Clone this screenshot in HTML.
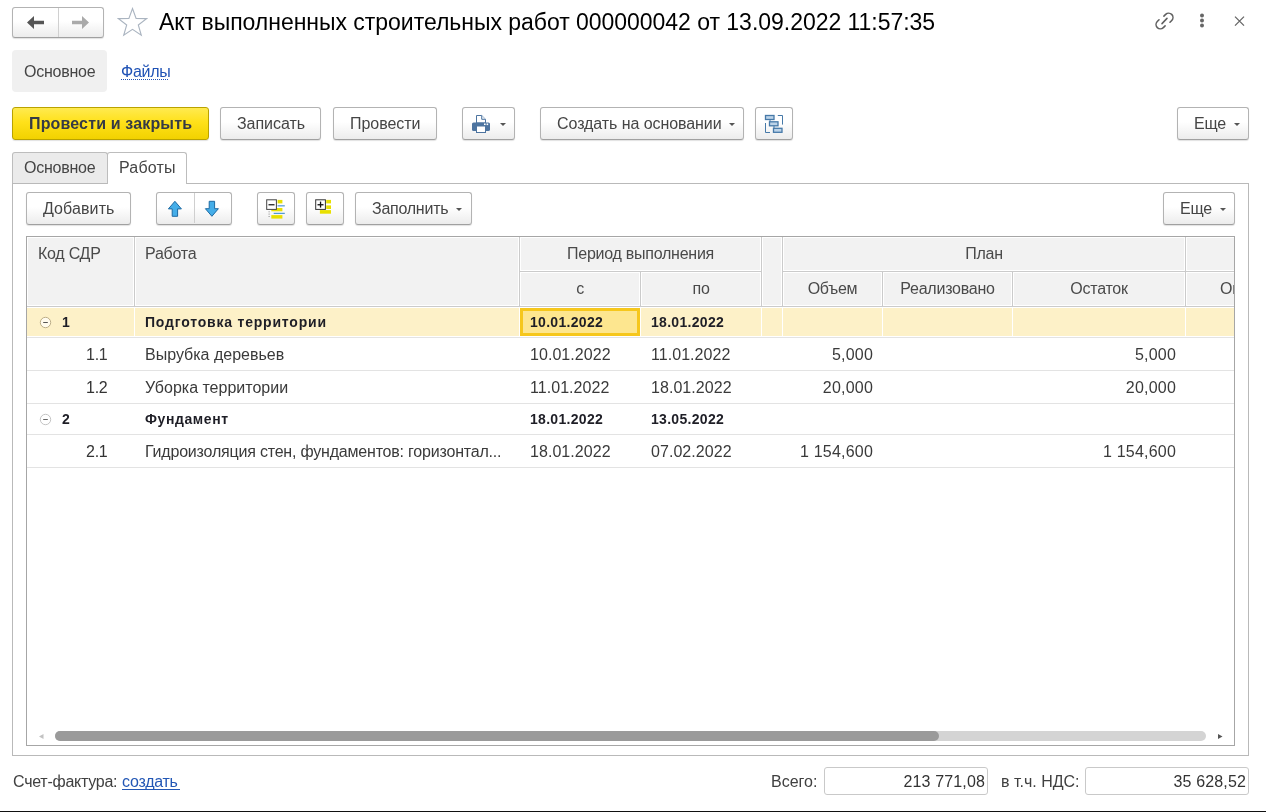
<!DOCTYPE html>
<html><head><meta charset="utf-8">
<style>
*{box-sizing:border-box}
html,body{margin:0;padding:0}
body{-webkit-font-smoothing:antialiased;will-change:transform;width:1266px;height:812px;overflow:hidden;position:relative;background:#fff;font-family:"Liberation Sans",sans-serif;font-size:16px;color:#454545;letter-spacing:-0.25px}
.a{position:absolute}
.t{position:absolute;white-space:nowrap;line-height:18px}
.btn{position:absolute;height:33px;border:1px solid #b3b3b3;border-bottom-color:#a0a0a0;border-radius:3px;background:linear-gradient(#fff 0%,#fff 45%,#ececec 100%);box-shadow:0 1px 1px rgba(0,0,0,.12)}
.btn .t{color:#444}
.tri{position:absolute;width:0;height:0;border-left:3.5px solid transparent;border-right:3.5px solid transparent;border-top:3.5px solid #555}
</style></head>
<body>

<!-- nav group -->
<div class="btn" style="left:12px;top:7px;width:92px;height:31px"></div>
<div class="a" style="left:58px;top:8px;width:1px;height:29px;background:#d0d0d0"></div>
<svg class="a" style="left:26px;top:15px" width="19" height="15" viewBox="0 0 19 15"><path d="M1 7.5 L8 1 V5.8 H18 V9.2 H8 V14 Z" fill="#555"/></svg>
<svg class="a" style="left:71px;top:15px" width="19" height="15" viewBox="0 0 19 15"><path d="M18 7.5 L11 1 V5.8 H1 V9.2 H11 V14 Z" fill="#aaa"/></svg>
<!-- star -->
<svg class="a" style="left:117px;top:7px" width="31" height="30" viewBox="0 0 31 30"><path d="M15.5 1.5 L19.1 11.4 L29.5 11.6 L21.3 18 L24.3 28.3 L15.5 22.3 L6.7 28.3 L9.7 18 L1.5 11.6 L11.9 11.4 Z" fill="none" stroke="#aab4c0" stroke-width="1.1"/></svg>
<div class="t" style="left:159px;top:9px;font-size:23px;line-height:26px;color:#000;letter-spacing:-0.03px">Акт выполненных строительных работ 000000042 от 13.09.2022 11:57:35</div>

<!-- top-right icons -->
<svg class="a" style="left:1153px;top:10px" width="23" height="22" viewBox="0 0 23 22"><g fill="none" stroke="#606060" stroke-width="1.55" stroke-linecap="round"><path d="M10.89 6.13 L12.66 4.36 A4.3 4.3 0 0 1 18.74 10.44 L16.97 12.21"/><path d="M12.11 15.87 L10.34 17.64 A4.3 4.3 0 0 1 4.26 11.56 L6.03 9.79"/><path d="M9 13.6 L14 8.4"/></g></svg>
<svg class="a" style="left:1198px;top:12px" width="8" height="18" viewBox="0 0 8 18"><g fill="#666"><circle cx="4" cy="3.6" r="2"/><circle cx="4" cy="8.5" r="2"/><circle cx="4" cy="13.4" r="2"/></g></svg>
<svg class="a" style="left:1233px;top:15px" width="13" height="12" viewBox="0 0 13 12"><g stroke="#666" stroke-width="1.3"><path d="M2 1.6 L11 10.6 M11 1.6 L2 10.6"/></g></svg>

<!-- page tabs -->
<div class="a" style="left:12px;top:50px;width:95px;height:42px;background:#f0f0f0;border-radius:4px"></div>
<div class="t" style="left:24px;top:63px">Основное</div>
<div class="t" style="left:121px;top:63px;color:#1f52b5">Файлы</div>
<div class="a" style="left:121px;top:79px;width:48px;height:1px;background:repeating-linear-gradient(90deg,#1f52b5 0 1px,transparent 1px 2px)"></div>

<!-- main command bar -->
<div class="btn" style="left:12px;top:107px;width:197px;border-color:#b9a200;background:linear-gradient(#ffea50 0%,#ffe11a 45%,#f2d200 100%)"></div>
<div class="t" style="left:29px;top:115px;font-weight:bold;color:#353a45;letter-spacing:0.15px">Провести и закрыть</div>

<div class="btn" style="left:220px;top:107px;width:101px"></div>
<div class="t" style="left:237px;top:115px;letter-spacing:-0.05px">Записать</div>
<div class="btn" style="left:333px;top:107px;width:104px"></div>
<div class="t" style="left:350px;top:115px;letter-spacing:-0.05px">Провести</div>

<div class="btn" style="left:462px;top:107px;width:53px"></div>
<svg class="a" style="left:471px;top:114px" width="20" height="20" viewBox="0 0 20 20">
 <path d="M5.5 1.5 H10.7 L14.5 5.3 V9 H5.5 Z" fill="#fff" stroke="#4d74a0" stroke-width="1"/>
 <path d="M10.7 1.5 V5.3 H14.5" fill="#eef2f6" stroke="#4d74a0" stroke-width="1"/>
 <rect x="1" y="8.5" width="18" height="8.5" rx="1.6" fill="#4d74a0"/>
 <rect x="13" y="9.5" width="1.6" height="1.6" fill="#fff"/><rect x="15.6" y="9.5" width="1.6" height="1.6" fill="#fff"/>
 <rect x="5.5" y="12" width="9" height="6.5" fill="#fff" stroke="#4d74a0" stroke-width="1"/>
</svg>
<div class="tri" style="left:500px;top:123px"></div>

<div class="btn" style="left:540px;top:107px;width:204px"></div>
<div class="t" style="left:557px;top:115px;letter-spacing:-0.07px">Создать на основании</div>
<div class="tri" style="left:729px;top:123px"></div>

<div class="btn" style="left:755px;top:107px;width:38px"></div>
<svg class="a" style="left:764px;top:114px" width="20" height="20" viewBox="0 0 20 20">
 <g fill="#bcd3e8" stroke="#4679a8" stroke-width="1.3">
 <rect x="1.5" y="1.5" width="8.5" height="4"/>
 <rect x="5.5" y="7.8" width="8.5" height="4"/>
 <rect x="9.5" y="14.3" width="8.5" height="4"/>
 </g>
 <g fill="none" stroke="#4679a8" stroke-width="1">
 <path d="M6 5.5 V7.8 M10 11.8 V14.3"/>
 <path d="M13.8 1.5 H18.5 V10.6"/>
 <path d="M1.5 9 V18.5 H6"/>
 </g>
</svg>

<div class="btn" style="left:1177px;top:107px;width:72px"></div>
<div class="t" style="left:1194px;top:115px">Еще</div>
<div class="tri" style="left:1234px;top:123px"></div>

<!-- content tabs -->
<div class="a" style="left:12px;top:152px;width:96px;height:32px;background:#ebebeb;border:1px solid #bdbdbd;border-bottom:none;border-radius:3px 3px 0 0"></div>
<div class="t" style="left:24px;top:159px">Основное</div>
<div class="a" style="left:12px;top:183px;width:1237px;height:573px;border:1px solid #b9b9b9"></div>
<div class="a" style="left:107px;top:152px;width:80px;height:32px;background:#fff;border:1px solid #bdbdbd;border-bottom:none;border-radius:3px 3px 0 0"></div>
<div class="t" style="left:119px;top:159px;letter-spacing:0.2px">Работы</div>

<!-- inner toolbar -->
<div class="btn" style="left:26px;top:192px;width:105px"></div>
<div class="t" style="left:43px;top:200px;letter-spacing:0.1px">Добавить</div>
<div class="btn" style="left:156px;top:192px;width:76px"></div>
<div class="a" style="left:194px;top:193px;width:1px;height:30px;background:#cfcfcf"></div>
<svg class="a" style="left:166px;top:200px" width="18" height="18" viewBox="0 0 18 18"><path d="M8.9 1.3 L15.4 8.9 H11.6 V16.3 H6.2 V8.9 H2.4 Z" fill="#45aee9" stroke="#1d6aa3" stroke-width="1" stroke-linejoin="round"/></svg>
<svg class="a" style="left:203px;top:200px" width="18" height="18" viewBox="0 0 18 18"><path d="M8.9 16.3 L15.4 8.7 H11.6 V1.3 H6.2 V8.7 H2.4 Z" fill="#45aee9" stroke="#1d6aa3" stroke-width="1" stroke-linejoin="round"/></svg>
<div class="btn" style="left:257px;top:192px;width:38px"></div>
<svg class="a" style="left:265px;top:198px" width="22" height="22" viewBox="0 0 22 22">
 <rect x="12.6" y="1.9" width="4.8" height="3.5" fill="#e8e000"/>
 <rect x="6.3" y="10" width="11.1" height="3.3" fill="#e8e000"/>
 <rect x="6.3" y="17.1" width="11.1" height="3.5" fill="#e8e000"/>
 <rect x="12.6" y="7.3" width="7.2" height="1.1" fill="#3d8fd0"/>
 <rect x="8.7" y="14.8" width="11.1" height="1.1" fill="#3d8fd0"/>
 <rect x="1.7" y="1.8" width="9.7" height="9.6" fill="#fff" stroke="#444" stroke-width="1"/>
 <rect x="3.5" y="6.1" width="6" height="1.3" fill="#222"/>
 <rect x="3.6" y="13.3" width="1" height="1" fill="#888"/><rect x="3.6" y="15.6" width="1" height="1" fill="#888"/><rect x="3.6" y="18" width="1" height="1" fill="#888"/>
</svg>
<div class="btn" style="left:306px;top:192px;width:38px"></div>
<svg class="a" style="left:314px;top:198px" width="22" height="22" viewBox="0 0 22 22">
 <rect x="12.2" y="1.9" width="4.8" height="3.5" fill="#e8e000"/>
 <rect x="12.2" y="7.4" width="4.8" height="3.6" fill="#e8e000"/>
 <rect x="5.9" y="12.1" width="11.1" height="3.6" fill="#e8e000"/>
 <rect x="1.7" y="1.8" width="9.7" height="9.6" fill="#fff" stroke="#333" stroke-width="1"/>
 <rect x="3.5" y="6.1" width="6" height="1.3" fill="#111"/>
 <rect x="5.9" y="3.6" width="1.3" height="6" fill="#111"/>
</svg>
<div class="btn" style="left:355px;top:192px;width:117px"></div>
<div class="t" style="left:372px;top:200px">Заполнить</div>
<div class="tri" style="left:456px;top:208px"></div>
<div class="btn" style="left:1163px;top:192px;width:72px"></div>
<div class="t" style="left:1180px;top:200px">Еще</div>
<div class="tri" style="left:1220px;top:208px"></div>

<!-- table -->
<div class="a" style="left:26px;top:236px;width:1209px;height:510px;border:1px solid #a6a6a6;background:#fff;overflow:hidden">
 <div class="a" style="left:0;top:0;width:1207px;height:70px;background:#cbcbcb"></div>
 <div class="a" style="left:0px;top:0px;width:107px;height:69px;background:#f2f2f2;border:1px solid #fff"></div>
 <div class="a" style="left:108px;top:0px;width:384px;height:69px;background:#f2f2f2;border:1px solid #fff"></div>
 <div class="a" style="left:493px;top:0px;width:241px;height:34px;background:#f2f2f2;border:1px solid #fff"></div>
 <div class="a" style="left:493px;top:35px;width:120px;height:34px;background:#f2f2f2;border:1px solid #fff"></div>
 <div class="a" style="left:614px;top:35px;width:120px;height:34px;background:#f2f2f2;border:1px solid #fff"></div>
 <div class="a" style="left:735px;top:0px;width:20px;height:69px;background:#f2f2f2;border:1px solid #fff"></div>
 <div class="a" style="left:756px;top:0px;width:402px;height:34px;background:#f2f2f2;border:1px solid #fff"></div>
 <div class="a" style="left:756px;top:35px;width:99px;height:34px;background:#f2f2f2;border:1px solid #fff"></div>
 <div class="a" style="left:856px;top:35px;width:129px;height:34px;background:#f2f2f2;border:1px solid #fff"></div>
 <div class="a" style="left:986px;top:35px;width:172px;height:34px;background:#f2f2f2;border:1px solid #fff"></div>
 <div class="a" style="left:1159px;top:0px;width:55px;height:34px;background:#f2f2f2;border:1px solid #fff"></div>
 <div class="a" style="left:1159px;top:35px;width:55px;height:34px;background:#f2f2f2;border:1px solid #fff"></div>
 <div class="a" style="left:0px;top:100px;width:1207px;height:1px;background:#e3e3e3"></div>
 <div class="a" style="left:0px;top:133px;width:1207px;height:1px;background:#e3e3e3"></div>
 <div class="a" style="left:0px;top:166px;width:1207px;height:1px;background:#e3e3e3"></div>
 <div class="a" style="left:0px;top:197px;width:1207px;height:1px;background:#e3e3e3"></div>
 <div class="a" style="left:0px;top:230px;width:1207px;height:1px;background:#e3e3e3"></div>
 <div class="a" style="left:0px;top:71px;width:107px;height:28px;background:#fdf1c8"></div>
 <div class="a" style="left:108px;top:71px;width:384px;height:28px;background:#fdf1c8"></div>
 <div class="a" style="left:614px;top:71px;width:120px;height:28px;background:#fdf1c8"></div>
 <div class="a" style="left:735px;top:71px;width:20px;height:28px;background:#fdf1c8"></div>
 <div class="a" style="left:756px;top:71px;width:99px;height:28px;background:#fdf1c8"></div>
 <div class="a" style="left:856px;top:71px;width:129px;height:28px;background:#fdf1c8"></div>
 <div class="a" style="left:986px;top:71px;width:172px;height:28px;background:#fdf1c8"></div>
 <div class="a" style="left:1159px;top:71px;width:55px;height:28px;background:#fdf1c8"></div>
 <div class="a" style="left:493px;top:71px;width:120px;height:28px;background:#fde68f;border:3px solid #f6c71c"></div>
 <svg class="a" style="left:12px;top:79px" width="13" height="13" viewBox="0 0 13 13"><circle cx="6.5" cy="6.5" r="5.2" fill="#fffbee" stroke="#bcae88" stroke-width="1"/><rect x="4.2" y="6" width="4.6" height="1" fill="#555"/></svg>
 <div class="t" style="left:35px;top:76px;font-size:14px;font-weight:bold;color:#1e1e26;letter-spacing:0.2px">1</div>
 <div class="t" style="left:118px;top:76px;font-size:14px;font-weight:bold;color:#1e1e26;letter-spacing:0.8px">Подготовка территории</div>
 <div class="t" style="left:503px;top:76px;font-size:14px;font-weight:bold;color:#1e1e26;letter-spacing:0.3px">10.01.2022</div>
 <div class="t" style="left:624px;top:76px;font-size:14px;font-weight:bold;color:#1e1e26;letter-spacing:0.3px">18.01.2022</div>
 <div class="t" style="left:59px;top:109px;color:#3a3a3a">1.1</div>
 <div class="t" style="left:118px;top:109px;color:#3a3a3a;letter-spacing:0">Вырубка деревьев</div>
 <div class="t" style="left:503px;top:109px;color:#3a3a3a;letter-spacing:0.05px">10.01.2022</div>
 <div class="t" style="left:624px;top:109px;color:#3a3a3a;letter-spacing:0.05px">11.01.2022</div>
 <div class="t" style="right:361px;top:109px;color:#3a3a3a;letter-spacing:0.2px">5,000</div>
 <div class="t" style="right:58px;top:109px;color:#3a3a3a;letter-spacing:0.2px">5,000</div>
 <div class="t" style="left:59px;top:142px;color:#333">1.2</div>
 <div class="t" style="left:118px;top:142px;color:#3a3a3a;letter-spacing:0">Уборка территории</div>
 <div class="t" style="left:503px;top:142px;color:#3a3a3a;letter-spacing:0.05px">11.01.2022</div>
 <div class="t" style="left:624px;top:142px;color:#3a3a3a;letter-spacing:0.05px">18.01.2022</div>
 <div class="t" style="right:361px;top:142px;color:#3a3a3a;letter-spacing:0.2px">20,000</div>
 <div class="t" style="right:58px;top:142px;color:#3a3a3a;letter-spacing:0.2px">20,000</div>
 <svg class="a" style="left:12px;top:176px" width="13" height="13" viewBox="0 0 13 13"><circle cx="6.5" cy="6.5" r="5.2" fill="#fff" stroke="#c4c4c4" stroke-width="1"/><rect x="4.2" y="6" width="4.6" height="1" fill="#666"/></svg>
 <div class="t" style="left:35px;top:173px;font-size:14px;font-weight:bold;color:#1e1e26;letter-spacing:0.1px">2</div>
 <div class="t" style="left:118px;top:173px;font-size:14px;font-weight:bold;color:#1e1e26;letter-spacing:0.6px">Фундамент</div>
 <div class="t" style="left:503px;top:173px;font-size:14px;font-weight:bold;color:#1e1e26;letter-spacing:0.3px">18.01.2022</div>
 <div class="t" style="left:624px;top:173px;font-size:14px;font-weight:bold;color:#1e1e26;letter-spacing:0.3px">13.05.2022</div>
 <div class="t" style="left:59px;top:206px;color:#333">2.1</div>
 <div class="t" style="left:118px;top:206px;color:#3a3a3a;letter-spacing:-0.2px">Гидроизоляция стен, фундаментов: горизонтал...</div>
 <div class="t" style="left:503px;top:206px;color:#3a3a3a;letter-spacing:0.05px">18.01.2022</div>
 <div class="t" style="left:624px;top:206px;color:#3a3a3a;letter-spacing:0.05px">07.02.2022</div>
 <div class="t" style="right:361px;top:206px;color:#3a3a3a;letter-spacing:0.2px">1 154,600</div>
 <div class="t" style="right:58px;top:206px;color:#3a3a3a;letter-spacing:0.2px">1 154,600</div>
 <div class="t" style="left:11px;top:8px;color:#4a4a4a">Код СДР</div>
 <div class="t" style="left:118px;top:8px;color:#4a4a4a">Работа</div>
 <div class="t" style="left:493px;top:8px;width:241px;text-align:center;color:#4a4a4a">Период выполнения</div>
 <div class="t" style="left:493px;top:43px;width:120px;text-align:center;color:#4a4a4a">с</div>
 <div class="t" style="left:614px;top:43px;width:120px;text-align:center;color:#4a4a4a">по</div>
 <div class="t" style="left:756px;top:8px;width:402px;text-align:center;color:#4a4a4a">План</div>
 <div class="t" style="left:756px;top:43px;width:99px;text-align:center;color:#4a4a4a">Объем</div>
 <div class="t" style="left:856px;top:43px;width:129px;text-align:center;color:#4a4a4a">Реализовано</div>
 <div class="t" style="left:986px;top:43px;width:172px;text-align:center;color:#4a4a4a">Остаток</div>
 <div class="t" style="left:1193px;top:43px;color:#4a4a4a">Оплачено</div>
 <div class="a" style="left:28px;top:494px;width:1151px;height:10px;background:#d4d4d4;border-radius:5px"></div>
 <div class="a" style="left:28px;top:494px;width:884px;height:10px;background:#9a9a9a;border-radius:5px"></div>
 <svg class="a" style="left:11px;top:496px" width="6" height="7" viewBox="0 0 6 7"><path d="M1 3.5 L5.5 1 V6 Z" fill="#c2c2c2"/></svg>
 <svg class="a" style="left:1190px;top:496px" width="6" height="7" viewBox="0 0 6 7"><path d="M5.5 3.5 L1 1 V6 Z" fill="#555"/></svg>
</div>

<!-- footer -->
<div class="t" style="left:13px;top:773px;color:#404040">Счет-фактура:</div>
<div class="t" style="left:122px;top:773px;color:#2357b5">создать</div>
<div class="a" style="left:122px;top:789px;width:58px;height:1px;background:#2357b5"></div>
<div class="t" style="left:771px;top:773px;color:#404040;letter-spacing:0">Всего:</div>
<div class="a" style="left:824px;top:767px;width:164px;height:28px;border:1px solid #c9c9c9;border-radius:3px;background:#fff"></div>
<div class="t" style="right:281px;top:773px;color:#333;letter-spacing:0.15px">213 771,08</div>
<div class="t" style="left:1001px;top:773px;color:#404040;letter-spacing:0">в т.ч. НДС:</div>
<div class="a" style="left:1085px;top:767px;width:164px;height:28px;border:1px solid #c9c9c9;border-radius:3px;background:#fff"></div>
<div class="t" style="right:20px;top:773px;color:#333;letter-spacing:0.15px">35 628,52</div>
<div class="a" style="left:0;top:811px;width:1266px;height:1px;background:#111"></div>

</body></html>
